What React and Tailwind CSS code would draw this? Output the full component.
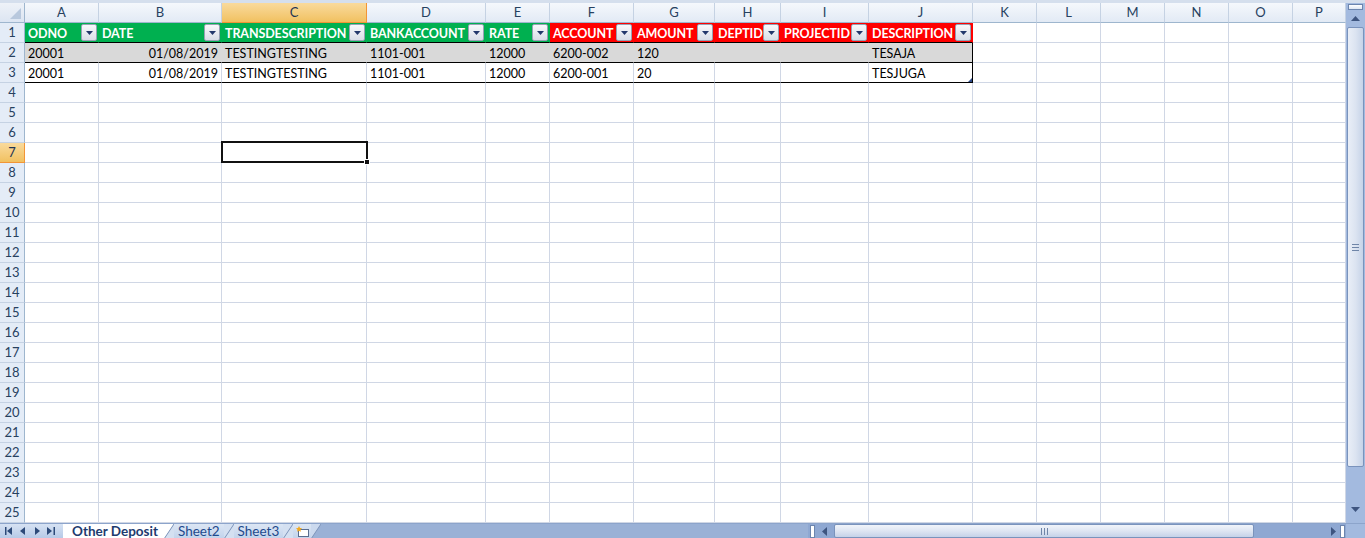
import React from 'react';

const cols = [
  { id: 'A', w: 'w-[74px]' },
  { id: 'B', w: 'w-[123px]' },
  { id: 'C', w: 'w-[145px]' },
  { id: 'D', w: 'w-[119px]' },
  { id: 'E', w: 'w-[64px]' },
  { id: 'F', w: 'w-[84px]' },
  { id: 'G', w: 'w-[81px]' },
  { id: 'H', w: 'w-[66px]' },
  { id: 'I', w: 'w-[88px]' },
  { id: 'J', w: 'w-[104px]' },
  { id: 'K', w: 'w-[64px]' },
  { id: 'L', w: 'w-[64px]' },
  { id: 'M', w: 'w-[64px]' },
  { id: 'N', w: 'w-[64px]' },
  { id: 'O', w: 'w-[64px]' },
  { id: 'P', w: 'w-[53px]' },
];

const headers = ['ODNO', 'DATE', 'TRANSDESCRIPTION', 'BANKACCOUNT', 'RATE', 'ACCOUNT', 'AMOUNT', 'DEPTID', 'PROJECTID', 'DESCRIPTION'];

const rows = [
  ['20001', '01/08/2019', 'TESTINGTESTING', '1101-001', '12000', '6200-002', '120', '', '', 'TESAJA'],
  ['20001', '01/08/2019', 'TESTINGTESTING', '1101-001', '12000', '6200-001', '20', '', '', 'TESJUGA'],
];

const FilterButton = () => (
  <span className="absolute right-[1px] top-[1px] flex h-[17px] w-[16px] items-center justify-center rounded-[2px] border border-[#98A1B4] bg-linear-to-b from-[#F8F9FB] to-[#D9DEE7]">
    <svg width="7" height="4" viewBox="0 0 7 4">
      <path d="M0 0h7L3.5 4z" fill="#23386B" />
    </svg>
  </span>
);

const RowHeader = ({ n, active }) => (
  <div
    className={`flex w-[25px] shrink-0 items-center justify-center border-r border-b pt-[1px] text-[13px] ${
      active
        ? 'border-r-[#F29536] border-b-[#F29536] bg-linear-to-b from-[#F9DA9C] to-[#F1C15F] text-[#1F3454]'
        : 'border-r-[#9EB6CE] border-b-[#C5D2E3] bg-[#E4ECF7] text-[#27415F]'
    }`}
  >
    {n}
  </div>
);

const Cell = ({ col, className = '', children }) => (
  <div
    className={`relative flex shrink-0 items-start whitespace-nowrap border-r border-b px-[3px] pt-[3px] leading-[15px] ${col.w} ${className}`}
  >
    {children}
  </div>
);

const NavIcon = ({ d }) => (
  <svg width="8" height="8" viewBox="0 0 8 8">
    <path d={d} fill="#2D4A79" />
  </svg>
);

const Slant = ({ left, right }) => (
  <svg width="10" height="15" viewBox="0 0 10 15" className="shrink-0">
    <path d="M0 0h10L0 15z" fill={left} />
    <path d="M0 15L10 0v15z" fill={right} />
    <path d="M0 15L10 0" stroke="#7B92B9" strokeWidth="1" />
  </svg>
);

const App = () => {
  return (
    <div className="h-[538px] w-[1365px] overflow-hidden bg-white font-[Lato,sans-serif] text-[12.5px] text-black">
      <div className="h-[3px] bg-[#D5DFED]" />
      <div className="flex h-[520px]">
        <div className="flex-1">
          {/* column letters */}
          <div className="flex h-5 text-[13px]">
            <div className="relative w-[25px] shrink-0 border-r border-b border-r-[#9EB6CE] border-b-[#9EB6CE] bg-linear-to-b from-[#EEF2F8] to-[#DCE5F2]">
              <svg className="absolute right-[3px] bottom-[3px]" width="11" height="11" viewBox="0 0 11 11">
                <path d="M11 0v11H0z" fill="#B8C8DD" />
              </svg>
            </div>
            {cols.map((c) => (
              <div
                key={c.id}
                className={`flex shrink-0 items-center justify-center border-r border-b pt-[1px] ${c.w} ${
                  c.id === 'C'
                    ? 'border-r-[#F29536] border-b-[#F29536] bg-linear-to-b from-[#F9DA9C] to-[#F1C15F] text-[#1F3454]'
                    : 'border-r-[#C5D2E3] border-b-[#9EB6CE] bg-linear-to-b from-[#F5F8FC] to-[#E2EAF5] text-[#27415F]'
                }`}
              >
                {c.id}
              </div>
            ))}
          </div>

          {/* row 1: table header */}
          <div className="flex h-5">
            <RowHeader n={1} />
            {cols.map((c, i) => {
              if (i < 10) {
                const green = i < 5;
                return (
                  <Cell
                    key={c.id}
                    col={c}
                    className={`overflow-hidden border-b-black font-bold tracking-[-0.1px] text-white ${
                      green ? 'border-r-[#00B050] bg-[#00B050]' : 'border-r-[#FF0000] bg-[#FF0000]'
                    }`}
                  >
                    {headers[i]}
                    <FilterButton />
                  </Cell>
                );
              }
              return <Cell key={c.id} col={c} className="border-[#D0D7E5]" />;
            })}
          </div>

          {/* rows 2-3 */}
          {rows.map((r, ri) => (
            <div key={ri} className="flex h-5">
              <RowHeader n={ri + 2} />
              {cols.map((c, i) => {
                if (i < 10) {
                  const gray = ri === 0;
                  const edge = i === 9 ? 'border-r-black' : gray ? 'border-r-[#D9D9D9]' : 'border-r-[#D0D7E5]';
                  return (
                    <Cell
                      key={c.id}
                      col={c}
                      className={`border-b-black ${edge} ${gray ? 'bg-[#D9D9D9]' : ''} ${i === 1 ? 'justify-end' : ''}`}
                    >
                      {r[i]}
                      {ri === 1 && i === 9 && (
                        <svg className="absolute right-0 bottom-0" width="4" height="4" viewBox="0 0 4 4">
                          <path d="M4 0v4H0z" fill="#2E4B8A" />
                        </svg>
                      )}
                    </Cell>
                  );
                }
                return <Cell key={c.id} col={c} className="border-[#D0D7E5]" />;
              })}
            </div>
          ))}

          {/* empty rows 4-25 */}
          {Array.from({ length: 22 }, (_, k) => k + 4).map((n) => (
            <div key={n} className="flex h-5">
              <RowHeader n={n} active={n === 7} />
              {cols.map((c) => (
                <Cell key={c.id} col={c} className={`border-[#D0D7E5] ${n === 7 && c.id === 'C' ? 'z-10' : ''}`}>
                  {n === 7 && c.id === 'C' && (
                    <div className="absolute -top-[2px] -right-[2px] -bottom-[1px] -left-[1px] border-2 border-[#111]">
                      <span className="absolute -right-[4px] -bottom-[4px] h-[6px] w-[6px] border border-white bg-[#111]" />
                    </div>
                  )}
                </Cell>
              ))}
            </div>
          ))}
        </div>

        {/* vertical scrollbar */}
        <div className="flex w-[19px] shrink-0 flex-col items-center bg-[#A3BADF]">
          <div className="mt-[1px] h-[6px] w-[15px] border border-[#6C85AE] bg-linear-to-b from-white to-[#DDE6F3]" />
          <div className="flex h-[17px] items-center">
            <svg width="9" height="5" viewBox="0 0 9 5">
              <path d="M4.5 0L9 5H0z" fill="#3E5580" />
            </svg>
          </div>
          <div className="flex h-[440px] w-[17px] items-center justify-center rounded-[2px] border border-[#7A93BC] bg-linear-to-r from-[#E9EEF7] via-[#DCE4F1] to-[#C6D3E8]">
            <div className="flex flex-col gap-[2px]">
              <span className="h-[1px] w-[7px] bg-[#6F85A8]" />
              <span className="h-[1px] w-[7px] bg-[#6F85A8]" />
              <span className="h-[1px] w-[7px] bg-[#6F85A8]" />
            </div>
          </div>
          <div className="flex-1" />
          <div className="mb-[9px] flex h-[10px] items-center">
            <svg width="9" height="5" viewBox="0 0 9 5">
              <path d="M0 0h9L4.5 5z" fill="#3E5580" />
            </svg>
          </div>
        </div>
      </div>

      {/* sheet tabs + horizontal scrollbar */}
      <div className="flex h-[15px] border-t border-[#8CA4CB]">
        <div className="flex w-[63px] shrink-0 items-center gap-[6px] bg-linear-to-b from-[#D6E2F3] to-[#B7CAE7] pl-[5px]">
          <NavIcon d="M0 0h1.5v8H0zM7 0v8L2 4z" />
          <NavIcon d="M6 0v8L1 4z" />
          <NavIcon d="M2 0v8l5-4z" />
          <NavIcon d="M0 0v8l5-4zM6.5 0H8v8H6.5z" />
        </div>
        <div className="flex h-full items-start bg-white pr-[6px] pl-[9px] text-[13.5px] leading-[15px] font-bold text-[#1E3B6E]">
          Other Deposit
        </div>
        <Slant left="#fff" right="#D4E0F1" />
        <div className="flex h-full items-start bg-linear-to-b from-[#DCE6F4] to-[#C3D4EC] px-[4px] text-[13.5px] leading-[15px] text-[#1E4A8C]">
          Sheet2
        </div>
        <Slant left="#D4E0F1" right="#D4E0F1" />
        <div className="flex h-full items-start bg-linear-to-b from-[#DCE6F4] to-[#C3D4EC] px-[4px] text-[13.5px] leading-[15px] text-[#1E4A8C]">
          Sheet3
        </div>
        <Slant left="#D4E0F1" right="#D4E0F1" />
        <div className="flex h-full items-start bg-linear-to-b from-[#DCE6F4] to-[#C3D4EC] px-[1px] pt-[1px]">
          <svg width="16" height="13" viewBox="0 0 16 13">
            <rect x="4.5" y="4.5" width="10" height="7" fill="#fff" stroke="#5B6E8F" />
            <path d="M5 1l1 2 2 .3-1.5 1.4.4 2L5 5.7 3.1 6.7l.4-2L2 3.3 4 3z" fill="#F2A81D" />
          </svg>
        </div>
        <Slant left="#CBD9EE" right="#9AB1D6" />
        <div className="flex-1 bg-[#9AB1D6]" />

        {/* horizontal scrollbar */}
        <div className="flex w-[538px] shrink-0 items-center bg-[#8FA8D2]">
          <div className="ml-[2px] h-[13px] w-[5px] border border-[#6C85AE] bg-white" />
          <div className="flex w-[19px] items-center justify-center">
            <svg width="5" height="9" viewBox="0 0 5 9">
              <path d="M5 0v9L0 4.5z" fill="#3E5580" />
            </svg>
          </div>
          <div className="flex h-[14px] w-[420px] items-center justify-center rounded-[2px] border border-[#7A93BC] bg-linear-to-b from-[#F1F4FA] via-[#DEE5F2] to-[#C5D2E8]">
            <div className="flex gap-[2px]">
              <span className="h-[7px] w-[1px] bg-[#6F85A8]" />
              <span className="h-[7px] w-[1px] bg-[#6F85A8]" />
              <span className="h-[7px] w-[1px] bg-[#6F85A8]" />
            </div>
          </div>
          <div className="flex-1" />
          <div className="flex w-[10px] items-center justify-center">
            <svg width="5" height="9" viewBox="0 0 5 9">
              <path d="M0 0v9l5-4.5z" fill="#3E5580" />
            </svg>
          </div>
          <div className="mr-[1px] ml-[2px] h-[13px] w-[5px] border border-[#6C85AE] bg-white" />
        </div>
        <div className="w-[19px] shrink-0 bg-[#A3BADF]" />
      </div>
    </div>
  );
};

export default App;
